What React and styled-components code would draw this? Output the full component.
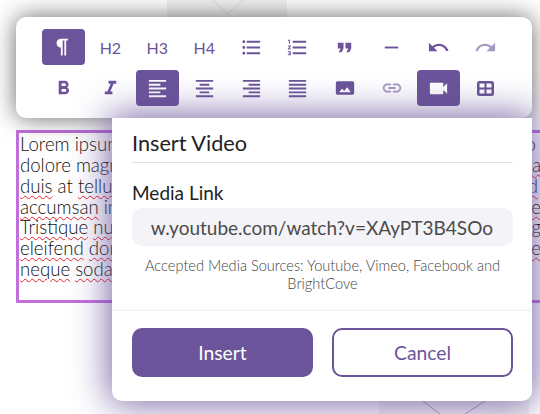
import React from "react";
import styled, { createGlobalStyle } from "styled-components";
import {
  MdFormatBold, MdFormatItalic, MdFormatAlignLeft, MdFormatAlignCenter, MdFormatAlignRight, MdFormatAlignJustify,
  MdFormatListBulleted, MdFormatListNumbered, MdFormatQuote, MdRemove, MdUndo, MdRedo, MdPanorama, MdLink, MdVideocam,
} from "react-icons/md";

const Global = createGlobalStyle`
  html, body { margin: 0; padding: 0; background: #fff; }
  body { width: 540px; height: 414px; overflow: hidden; font-family: Lato, "Open Sans", sans-serif; }
  #root { width: 540px; height: 414px; }
`;

const Stage = styled.div`
  position: relative;
  width: 540px;
  height: 414px;
  overflow: hidden;
  background: #fff;
  padding-top: 17px;
  box-sizing: border-box;
`;

const Tile = styled.svg`
  position: absolute;
  display: block;
  background: #f2f2f2;
  left: ${(p) => p.$x}px;
  top: ${(p) => p.$y}px;
`;

const Toolbar = styled.div`
  position: relative;
  z-index: 2;
  margin-left: 16px;
  width: 516px;
  height: 101px;
  box-sizing: border-box;
  padding: 12px 0 0 26px;
  background: #fff;
  border-radius: 10px;
  box-shadow: 0 0 24px rgba(0, 0, 0, 0.6);
  display: grid;
  grid-template-columns: repeat(10, 43px);
  grid-auto-rows: 36px;
  column-gap: 3.9px;
  row-gap: 5px;
`;

const Tool = styled.div`
  display: flex;
  align-items: center;
  justify-content: center;
  border-radius: 4px;
  font-size: ${(p) => p.$size || 23}px;
  color: ${(p) => (p.$active ? "#fff" : "#6b5499")};
  background: ${(p) => (p.$active ? "#6b5499" : "transparent")};
  opacity: ${(p) => (p.$dim ? 0.6 : 1)};
`;

const Editor = styled.div`
  position: absolute;
  z-index: 1;
  left: 16px;
  top: 130px;
  width: 560px;
  height: 173px;
  box-sizing: border-box;
  border: 3px solid #c06fdb;
  padding: 1px 0 0 1px;
  font-size: 18.6px;
  font-weight: 300;
  line-height: 20.85px;
  color: #111;
`;

const Line = styled.div`
  width: 521px;
  box-sizing: border-box;
  padding-right: ${(p) => p.$inset || 0}px;
  display: flex;
  justify-content: space-between;
  white-space: nowrap;
`;

const Misspelt = styled.span`
  text-decoration: underline wavy #e8202a 1px;
  text-underline-offset: 2px;
`;

const Modal = styled.div`
  position: absolute;
  z-index: 3;
  left: 112px;
  top: 118px;
  width: 420px;
  height: 283px;
  background: #fff;
  border-radius: 0 0 10px 10px;
  box-shadow: 0 0 36px 3px rgba(100, 78, 150, 0.85);
  display: flex;
  flex-direction: column;
`;

const Body = styled.div`
  height: 193px;
  box-sizing: border-box;
  padding: 0 19px 0 20px;
  display: flex;
  flex-direction: column;
  border-bottom: 1px solid #f2f2f2;
  box-shadow: inset 0 -8px 8px -8px rgba(0, 0, 0, 0.05);
`;

const Title = styled.div`
  height: 45px;
  box-sizing: border-box;
  padding-top: 12px;
  font-size: 21.7px;
  line-height: 27px;
  color: #222;
  border-bottom: 1px solid #e1dfec;
`;

const Label = styled.div`
  margin-top: 18px;
  font-size: 19px;
  line-height: 24px;
  color: #222;
`;

const Input = styled.div`
  margin-top: 3px;
  height: 38px;
  border-radius: 10px;
  background: #f3f3f8;
  display: flex;
  align-items: center;
  justify-content: flex-end;
  padding-right: 20px;
  font-size: 19px;
  color: #4b4b4b;
  white-space: nowrap;
`;

const Hint = styled.div`
  margin-top: 11px;
  text-align: center;
  font-size: 14.6px;
  font-weight: 300;
  line-height: 18px;
  color: #444;
`;

const Actions = styled.div`
  flex: 1;
  display: grid;
  grid-template-columns: 181px 181px;
  column-gap: 19px;
  padding: 17px 19px 0 20px;
  align-items: start;
`;

const Btn = styled.div`
  height: 49px;
  box-sizing: border-box;
  border-radius: 10px;
  display: flex;
  align-items: center;
  justify-content: center;
  font-size: 19.3px;
  color: ${(p) => (p.$primary ? "#fff" : "#6b5499")};
  background: ${(p) => (p.$primary ? "#6b5499" : "#fff")};
  border: 2px solid #6b5499;
`;

const W = ({ children }) => <Misspelt>{children}</Misspelt>;

const ParagraphIcon = () => (
  <svg width="21" height="21" viewBox="0 0 24 24" fill="currentColor">
    <path d="M9 12v9h2V4h2v17h2V4h2V2H9C6 2 4 4.5 4 7s2 5 5 5z" />
  </svg>
);

const TableIcon = () => (
  <svg width="17" height="15" viewBox="0 0 17 15" fill="currentColor">
    <path
      fillRule="evenodd"
      d="M2.5 0h12A2.500 2.500 0 0 1 17 2.500v10a2.500 2.500 0 0 1-2.500 2.500h-12A2.500 2.500 0 0 1 0 12.500v-10A2.500 2.500 0 0 1 2.500 0zM2.500 2.500v4h5v-4zm7 0v4h5v-4zM2.500 8.500v4h5v-4zm7 0v4h5v-4z"
    />
  </svg>
);

export default function App() {
  return (
    <Stage>
      <Global />
      <Tile $x={167} $y={0} width="120" height="17">
        <path d="M46 0l14 14L76 0" fill="none" stroke="#dedede" />
      </Tile>
      <Tile $x={379} $y={400} width="150" height="14">
        <path d="M44 1l17 13M106 1L86 14" fill="none" stroke="#a89cc0" />
      </Tile>
      <Toolbar>
        <Tool $active><ParagraphIcon /></Tool>
        <Tool $size={16}>H2</Tool>
        <Tool $size={16}>H3</Tool>
        <Tool $size={16}>H4</Tool>
        <Tool><MdFormatListBulleted /></Tool>
        <Tool><MdFormatListNumbered /></Tool>
        <Tool><MdFormatQuote /></Tool>
        <Tool><MdRemove /></Tool>
        <Tool><MdUndo /></Tool>
        <Tool $dim><MdRedo /></Tool>
        <Tool><MdFormatBold /></Tool>
        <Tool><MdFormatItalic /></Tool>
        <Tool $active><MdFormatAlignLeft /></Tool>
        <Tool><MdFormatAlignCenter /></Tool>
        <Tool><MdFormatAlignRight /></Tool>
        <Tool><MdFormatAlignJustify /></Tool>
        <Tool $size={20}><MdPanorama /></Tool>
        <Tool $dim $size={22}><MdLink /></Tool>
        <Tool $active><MdVideocam /></Tool>
        <Tool><TableIcon /></Tool>
      </Toolbar>
      <Editor>
        <Line $inset={5}><span>Lorem ipsum dolor sit amet</span><span>o</span></Line>
        <Line><span>dolore magna aliqua ut enim</span><W>ra</W></Line>
        <Line $inset={3}><span><W>duis</W> at <W>tellus</W> at urna</span><W>d</W></Line>
        <Line><span><W>accumsan</W> in nisl nisi</span><W>e</W></Line>
        <Line><span><W>Tristique</W> <W>nulla</W> aliquet</span><W>ng</W></Line>
        <Line><span><W>eleifend</W> <W>donec</W> pretium</span><W>e</W></Line>
        <Line><span><W>neque</W> <W>sodales</W> ut etiam</span></Line>
      </Editor>
      <Modal>
        <Body>
          <Title>Insert Video</Title>
          <Label>Media Link</Label>
          <Input>w.youtube.com/watch?v=XAyPT3B4SOo</Input>
          <Hint>Accepted Media Sources: Youtube, Vimeo, Facebook and BrightCove</Hint>
        </Body>
        <Actions>
          <Btn $primary>Insert</Btn>
          <Btn>Cancel</Btn>
        </Actions>
      </Modal>
    </Stage>
  );
}
